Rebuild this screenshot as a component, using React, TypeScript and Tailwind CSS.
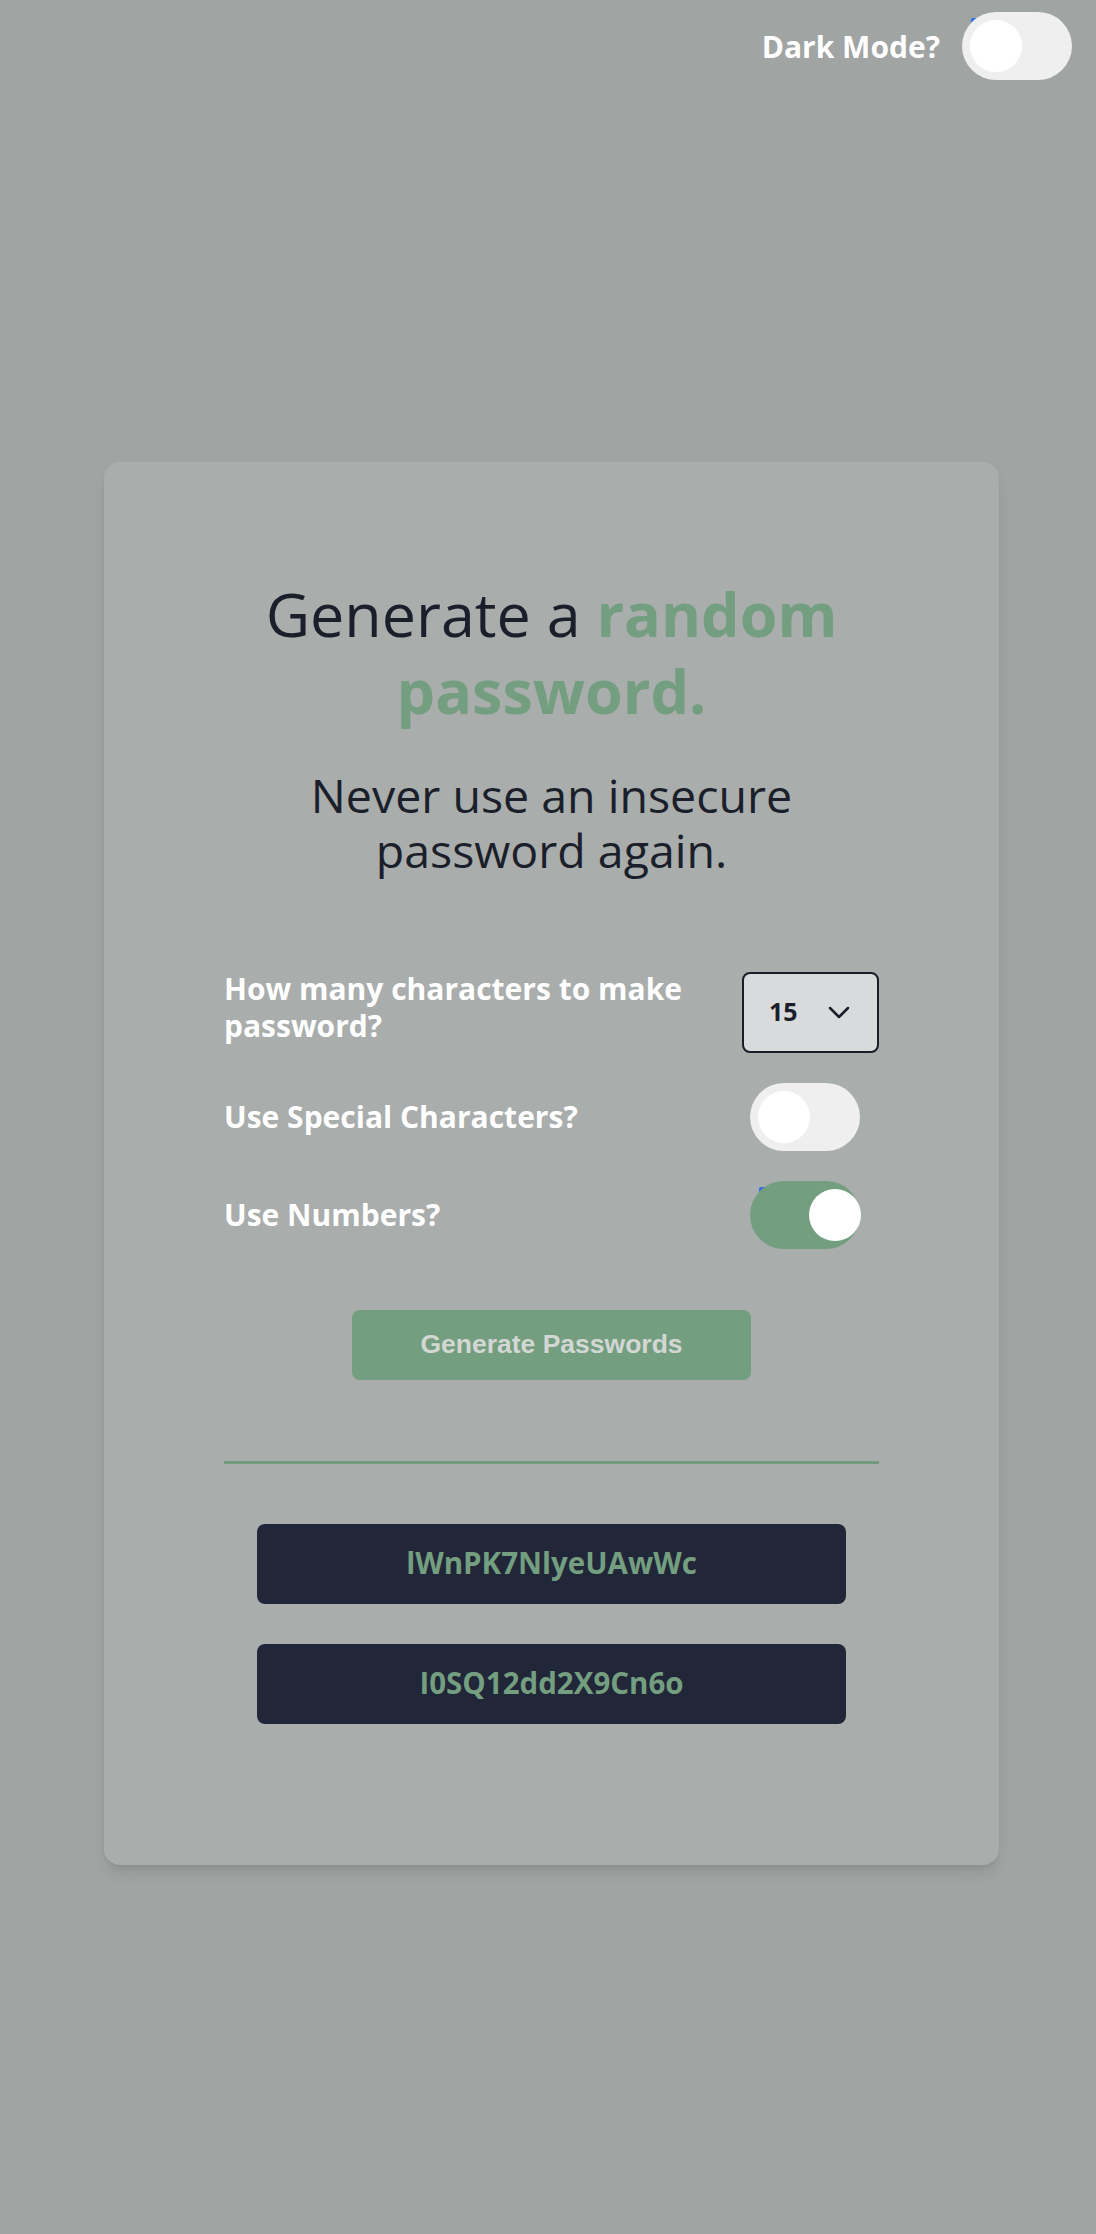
import React from 'react';

const Toggle = ({ on, mark = false }: { on: boolean; mark?: boolean }) => (
  <div className="relative w-[110px] h-[68px] shrink-0">
    {mark && <div className="absolute left-[9px] top-[6px] w-[13px] h-[13px] rounded-[2px] bg-[#2f6fe8]" />}
    <div className={`relative w-[110px] h-[68px] rounded-full ${on ? 'bg-[#739e7f]' : 'bg-[#efefef]'}`}>
      <div className={`absolute top-2 w-[52px] h-[52px] rounded-full bg-white ${on ? 'left-[59px]' : 'left-2'}`} />
    </div>
  </div>
);

const passwords = ['lWnPK7NlyeUAwWc', 'I0SQ12dd2X9Cn6o'];

export default function App() {
  return (
    <div className="min-h-screen bg-[#a0a4a3] flex flex-col" style={{ fontFamily: '"Open Sans", "Noto Sans", sans-serif' }}>
      <header className="h-[92px] flex justify-end items-center gap-[22px] pr-6">
        <span className="text-white font-bold text-[30px]">Dark Mode?</span>
        <Toggle on={false} mark />
      </header>

      <main className="flex-1 flex items-center justify-center pl-[7px]">
        <div className="w-[895px] bg-[#a9adac] rounded-2xl shadow-lg px-[120px] pt-[113px] pb-[141px]">
          <h1 className="text-center text-[61px] leading-[77px] text-[#1a1f2b]">
            Generate a <span className="font-bold text-[#739e7f]">random password.</span>
          </h1>
          <p className="mt-[39px] mx-auto max-w-[600px] text-center text-[46.5px] leading-[55px] text-[#1a1f2b]">
            Never use an insecure password again.
          </p>

          <div className="mt-[94px] flex flex-col gap-[30px]">
            <div className="flex items-start justify-between gap-6">
              <label className="-mt-[2px] text-white font-bold text-[30px] leading-[37px]">
                How many characters to make password?
              </label>
              <div className="w-[137px] h-[81px] shrink-0 rounded-lg border-2 border-[#1a1d27] bg-[#d9dadb] flex items-center pl-[25px] gap-[30px]">
                <span className="font-bold text-[25px] text-[#1a1f2b]">15</span>
                <svg width="22" height="13" viewBox="0 0 22 13" fill="none">
                  <polyline points="2,2 11,11 20,2" stroke="#1a1f2b" strokeWidth="2.5" strokeLinecap="round" strokeLinejoin="round" />
                </svg>
              </div>
            </div>
            <div className="flex items-center justify-between gap-6">
              <label className="text-white font-bold text-[30px] leading-[37px]">Use Special Characters?</label>
              <div className="w-[137px] pl-2">
                <Toggle on={false} />
              </div>
            </div>
            <div className="flex items-center justify-between gap-6">
              <label className="text-white font-bold text-[30px] leading-[37px]">Use Numbers?</label>
              <div className="w-[137px] pl-2">
                <Toggle on={true} mark />
              </div>
            </div>
          </div>

          <button
            className="mt-[61px] mx-auto block w-[399px] h-[70px] rounded-lg bg-[#739e7f] text-[#d3d7d4] font-bold text-[26.5px]"
            style={{ fontFamily: '"Liberation Sans", Arial, sans-serif' }}
          >
            Generate Passwords
          </button>

          <div className="mt-[81px] h-[3px] bg-[#739a7e]" />

          <div className="mt-[60px] flex flex-col items-center gap-10">
            {passwords.map((p) => (
              <div key={p} className="w-[589px] h-[80px] rounded-lg bg-[#212639] flex items-center justify-center text-[#739e7f] font-bold text-[29.5px]">
                {p}
              </div>
            ))}
          </div>
        </div>
      </main>
    </div>
  );
}
